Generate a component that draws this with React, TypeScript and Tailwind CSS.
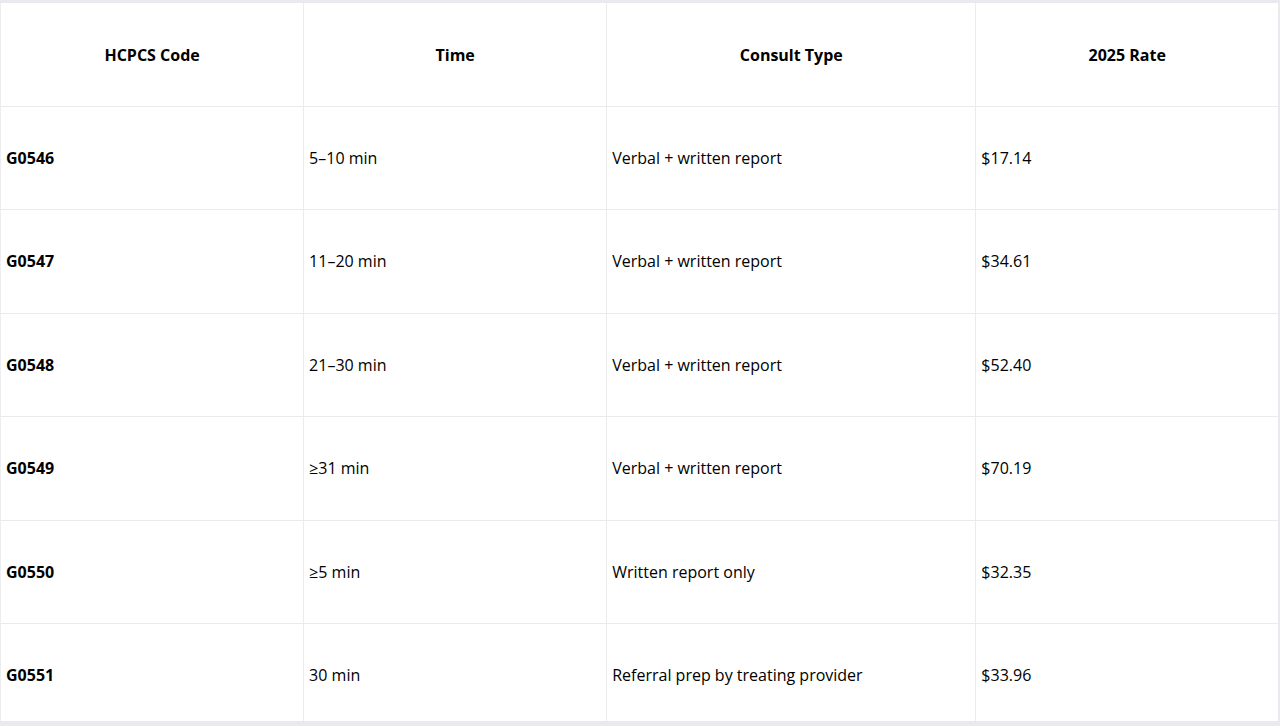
import React from "react";

interface RateRow {
  code: string;
  time: string;
  consult: string;
  rate: string;
}

const rows: RateRow[] = [
  { code: "G0546", time: "5–10 min", consult: "Verbal + written report", rate: "$17.14" },
  { code: "G0547", time: "11–20 min", consult: "Verbal + written report", rate: "$34.61" },
  { code: "G0548", time: "21–30 min", consult: "Verbal + written report", rate: "$52.40" },
  { code: "G0549", time: "≥31 min", consult: "Verbal + written report", rate: "$70.19" },
  { code: "G0550", time: "≥5 min", consult: "Written report only", rate: "$32.35" },
  { code: "G0551", time: "30 min", consult: "Referral prep by treating provider", rate: "$33.96" },
];

export default function App() {
  return (
    <div
      className="h-[726px] w-[1280px] overflow-hidden bg-[#e9e9ef] pt-[3px] pr-[2px] pb-[5px] text-black"
      style={{ fontFamily: '"Open Sans", "Noto Sans", sans-serif' }}
    >
      <div className="h-[718px] overflow-hidden">
        <table className="w-[1278px] table-fixed border-collapse bg-white text-[16px] border-l border-[#ededf0]">
          <colgroup>
            <col className="w-[303px]" />
            <col className="w-[303px]" />
            <col className="w-[369px]" />
            <col className="w-[302px]" />
          </colgroup>
          <thead>
            <tr className="h-[103px] border-b border-[#ebebeb]">
              {["HCPCS Code", "Time", "Consult Type", "2025 Rate"].map((h, i) => (
                <th
                  key={h}
                  className={
                    "text-center font-bold px-[5px] pt-[2px] " + (i < 3 ? "border-r border-[#ebebeb]" : "")
                  }
                >
                  {h}
                </th>
              ))}
            </tr>
          </thead>
          <tbody>
            {rows.map((r) => (
              <tr key={r.code} className="h-[103.5px] border-b border-[#ebebeb]">
                <td className="px-[5px] font-bold border-r border-[#ebebeb]">{r.code}</td>
                <td className="px-[5px] border-r border-[#ebebeb]">{r.time}</td>
                <td className="px-[5px] border-r border-[#ebebeb]">{r.consult}</td>
                <td className="px-[5px]">{r.rate}</td>
              </tr>
            ))}
          </tbody>
        </table>
      </div>
    </div>
  );
}
